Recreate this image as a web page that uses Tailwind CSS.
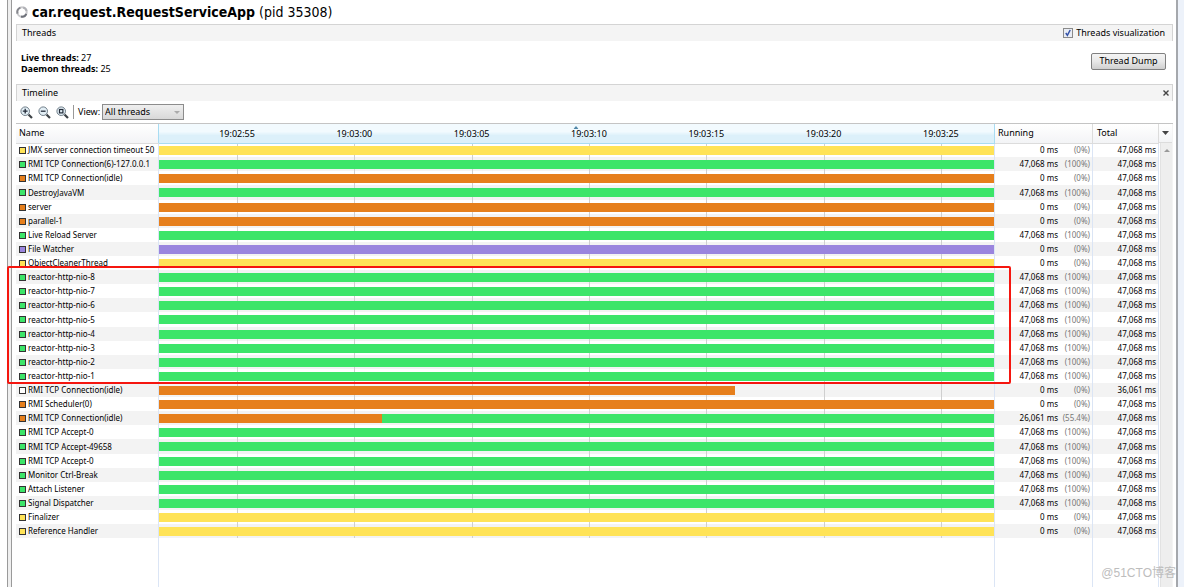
<!DOCTYPE html>
<html lang="en">
<head>
<meta charset="utf-8">
<title>car.request.RequestServiceApp (pid 35308)</title>
<script src="https://cdn.jsdelivr.net/npm/@tailwindcss/browser@4"></script>
</head>
<body class="h-screen overflow-hidden bg-white font-['Noto_Sans','Noto_Sans_CJK_SC',sans-serif] text-[9px] leading-3 text-black">
<div class="flex h-full">
  <div class="ml-[7px] w-[5px] shrink-0 border-x border-[#9a9a9a] bg-[#efefef]"></div>

  <main class="relative flex min-w-0 flex-1 flex-col pr-[3px] pl-1">
    <h1 class="flex h-6 items-center gap-1 font-['DejaVu_Sans_Condensed',sans-serif] text-[14px] leading-6 whitespace-pre">
      <svg class="mb-px size-3" viewBox="0 0 12 12" fill="none" stroke-width="2" aria-hidden="true">
        <circle cx="6" cy="6" r="4.7" stroke="#c9c9cc"/>
        <path d="M1.6 7.6A4.7 4.7 0 0 1 4.4 1.6" stroke="#85868c"/>
        <path d="M7.2 1.5A4.7 4.7 0 0 1 10.6 5" stroke="#b0b1b6"/>
        <path d="M10.3 7.8A4.7 4.7 0 0 1 5 10.6" stroke="#6f727b"/>
      </svg><span><b>car.request.RequestServiceApp</b> (pid 35308)</span>
    </h1>

    <section>
      <header class="flex h-[17px] items-center justify-between border border-b-0 border-[#d4d4d4] bg-[#f4f4f4] pr-[7px] pl-[5px]">
        <h2>Threads</h2>
        <label class="flex items-center gap-[3px]">
          <span class="grid size-[10px]">
            <input type="checkbox" checked class="peer col-start-1 row-start-1 size-[10px] appearance-none border border-[#8a8a8a] bg-[#e9edf5]">
            <svg class="pointer-events-none invisible z-10 col-start-1 row-start-1 size-[10px] peer-checked:visible" viewBox="0 0 10 10" fill="none" stroke="#3553a8" stroke-width="1.5"><path d="M2.8 5l1.6 2.4L7.2 2"/></svg>
          </span>
          Threads visualization
        </label>
      </header>
      <div class="flex h-[43px] items-center justify-between pr-[7px] pl-[5px]">
        <div class="leading-[11px]">
          <p><b>Live threads:</b> 27</p>
          <p><b>Daemon threads:</b> 25</p>
        </div>
        <button class="mb-[3px] h-[17px] w-[75px] rounded-xs border border-[#808080] bg-linear-to-b from-[#f4f4f4] via-[#e8e8e8] to-[#cfcfcf]">Thread Dump</button>
      </div>
    </section>

    <section class="flex min-h-0 flex-1 flex-col">
      <header class="flex h-[17px] shrink-0 items-center justify-between border border-b-0 border-[#d4d4d4] bg-[#f4f4f4] pr-[3px] pl-[5px]">
        <h2>Timeline</h2>
        <button aria-label="Close timeline" class="flex">
          <svg class="size-[6px]" viewBox="0 0 6 6" stroke="#444" stroke-width="1.4"><path d="M.5 .5l5 5M5.5 .5l-5 5"/></svg>
        </button>
      </header>

      <div class="flex h-[22px] shrink-0 items-center pl-1">
        <button aria-label="Zoom in" class="mr-[5px]">
          <svg class="size-[13px]" viewBox="0 0 13 13" fill="none"><path d="M8.5 8.5l3.5 3.5" stroke="#3c4146" stroke-width="2.2"/><circle cx="5.2" cy="5.2" r="4.3" fill="#e2eef5" stroke="#6f7d88"/><path d="M2.8 5.2h4.8M5.2 2.8v4.8" stroke="#222a38" stroke-width="1.3"/></svg>
        </button>
        <button aria-label="Zoom out" class="mr-[5px]">
          <svg class="size-[13px]" viewBox="0 0 13 13" fill="none"><path d="M8.5 8.5l3.5 3.5" stroke="#3c4146" stroke-width="2.2"/><circle cx="5.2" cy="5.2" r="4.3" fill="#e2eef5" stroke="#6f7d88"/><path d="M2.8 5.2h4.8" stroke="#222a38" stroke-width="1.3"/></svg>
        </button>
        <button aria-label="Scale to fit" class="mr-1">
          <svg class="size-[13px]" viewBox="0 0 13 13" fill="none"><path d="M8.5 8.5l3.5 3.5" stroke="#3c4146" stroke-width="2.2"/><circle cx="5.2" cy="5.2" r="4.3" fill="#e2eef5" stroke="#6f7d88"/><rect x="3.5" y="3.5" width="3.4" height="3.4" stroke="#222a38" stroke-width="1.2"/></svg>
        </button>
        <span class="mr-1 h-[14px] w-px bg-[#999]"></span>
        <label for="view" class="mr-[2px]">View:</label>
        <div class="relative">
          <select id="view" class="block h-4 w-[82px] appearance-none border border-[#8c8c8c] bg-linear-to-b from-[#efefef] to-[#d8d8d8] pl-[2px] leading-3">
            <option>All threads</option>
          </select>
          <svg class="pointer-events-none absolute top-[7px] right-1 h-[3px] w-[6px]" viewBox="0 0 6 3" fill="#aaa"><path d="M0 0h6L3 3z"/></svg>
        </div>
      </div>

      <div class="relative flex min-h-0 flex-1 border-t border-[#c4c4c4]">
        <table class="h-full min-w-0 flex-1 table-fixed border-collapse">
          <colgroup><col class="w-[142px]"><col><col class="w-[98px]"><col class="w-[66px]"></colgroup>
          <thead>
            <tr class="h-[19px] bg-linear-to-b from-white to-[#f3f4f6] text-left">
              <th class="border-r border-b border-[#a9dcf2] border-b-[#dcdcdc] p-0 pl-[3px] font-normal">Name</th>
              <th id="axis" class="relative border-r border-b border-[#a9dcf2] bg-linear-to-b from-[#f2fafe] from-40% to-[#dcf0fa] to-60% p-0 font-normal">
                <svg class="absolute top-[2px] left-1/2 h-[3px] w-[5px] -translate-x-1/2" viewBox="0 0 5 3" fill="#5087a8"><path d="M0 3h5L2.5 0z"/></svg>
              </th>
              <th class="border-r border-b border-[#dcdcdc] p-0 pl-[3px] font-normal">Running</th>
              <th class="border-r border-b border-[#dcdcdc] p-0 pl-1 font-normal">Total</th>
            </tr>
          </thead>
          <tbody id="rows" class="text-[8px] whitespace-nowrap"></tbody>
        </table>
        <div class="flex w-[14px] shrink-0 flex-col border-r border-[#f4f4f4]">
          <button aria-label="Choose columns" class="flex h-[19px] shrink-0 items-center justify-center border-b border-[#dcdcdc] bg-linear-to-b from-white to-[#f3f4f6]">
            <svg class="h-1 w-[7px]" viewBox="0 0 7 4" fill="#444"><path d="M0 0h7L3.5 4z"/></svg>
          </button>
          <div class="ml-px flex flex-1 justify-center border-l border-[#e2e2e2] bg-[#eeeeee] pt-[6px]">
            <svg class="h-[3px] w-[6px]" viewBox="0 0 6 3" fill="#999"><path d="M0 3h6L3 0z"/></svg>
          </div>
        </div>
        <div class="pointer-events-none absolute top-[142px] -left-[9px] right-[162px] h-[118px] rounded-xs border-2 border-[#f5160f]"></div>
      </div>
    </section>
  </main>

  <div class="w-2 shrink-0 border-l-2 border-[#a5a8ad] bg-[#edf2fa]"></div>
</div>
<div class="pointer-events-none absolute right-2 bottom-[6px] font-['Liberation_Sans','Noto_Sans_CJK_SC',sans-serif] text-[12px] leading-4 text-[#bdbdbd]">@51CTO博客</div>

<script>
const colours = {
  y: 'bg-[#ffe357]',
  g: 'bg-[#3ce569]',
  o: 'bg-[#e67f1c]',
  p: 'bg-[#9a85de]',
  w: 'bg-white'
};
const none = ['0 ms', '(0%)'], full = ['47,068 ms', '(100%)'];
// name, marker, bar segments [colour, percent of the timeline], running, total
const threads = [
  ['JMX server connection timeout 50', 'y', [['y', 100]], none],
  ['RMI TCP Connection(6)-127.0.0.1', 'g', [['g', 100]], full],
  ['RMI TCP Connection(idle)', 'o', [['o', 100]], none],
  ['DestroyJavaVM', 'g', [['g', 100]], full],
  ['server', 'o', [['o', 100]], none],
  ['parallel-1', 'o', [['o', 100]], none],
  ['Live Reload Server', 'g', [['g', 100]], full],
  ['File Watcher', 'p', [['p', 100]], none],
  ['ObjectCleanerThread', 'y', [['y', 100]], none],
  ...[8, 7, 6, 5, 4, 3, 2, 1].map(n => ['reactor-http-nio-' + n, 'g', [['g', 100]], full]),
  ['RMI TCP Connection(idle)', 'w', [['o', 69]], none, '36,061 ms'],
  ['RMI Scheduler(0)', 'o', [['o', 100]], none],
  ['RMI TCP Connection(idle)', 'o', [['o', 26.8], ['g', 73.2]], ['26,061 ms', '(55.4%)']],
  ['RMI TCP Accept-0', 'g', [['g', 100]], full],
  ['RMI TCP Accept-49658', 'g', [['g', 100]], full],
  ['RMI TCP Accept-0', 'g', [['g', 100]], full],
  ['Monitor Ctrl-Break', 'g', [['g', 100]], full],
  ['Attach Listener', 'g', [['g', 100]], full],
  ['Signal Dispatcher', 'g', [['g', 100]], full],
  ['Finalizer', 'y', [['y', 100]], none],
  ['Reference Handler', 'y', [['y', 100]], none]
];
const times = ['19:02:55', '19:03:00', '19:03:05', '19:03:10', '19:03:15', '19:03:20', '19:03:25'];
const place = i => 9.4 + i * 14.04;

document.getElementById('axis').insertAdjacentHTML('beforeend', times.map((t, i) =>
  `<span class="absolute top-1 -translate-x-1/2" style="left:${place(i)}%">${t}</span>`).join(''));

const ticks = times.map((t, i) =>
  `<i class="absolute inset-y-0 w-px bg-[#cfcfcf]" style="left:${place(i)}%"></i>`).join('');

document.getElementById('rows').innerHTML = threads.map(([name, mark, bars, [run, pct], total = '47,068 ms'], i) => `
  <tr class="${i % 9 === 3 ? 'h-[15px]' : 'h-[14px]'} ${i % 2 ? 'bg-[#f3f3f3]' : 'bg-white'}">
    <td class="border-r border-[#dbe5f5] p-0 pl-[3px]"><div class="flex items-center gap-[2px]"><i class="size-[7px] shrink-0 border border-[#333] ${colours[mark]}"></i>${name}</div></td>
    <td class="relative border-r border-[#dbe5f5] p-0">${ticks}<div class="relative flex h-[9px]">${bars.map(([c, w]) => `<i class="${colours[c]}" style="width:${w}%"></i>`).join('')}</div></td>
    <td class="border-r border-[#dbe5f5] p-0 pr-[2px]"><div class="flex justify-end"><span>${run}</span><span class="w-8 text-right text-[#777]">${pct}</span></div></td>
    <td class="border-r border-[#dbe5f5] p-0 pr-[2px] text-right">${total}</td>
  </tr>`).join('') +
  '<tr>' + '<td class="border-r border-[#dbe5f5] p-0"></td>'.repeat(4) + '</tr>';
</script>
</body>
</html>
